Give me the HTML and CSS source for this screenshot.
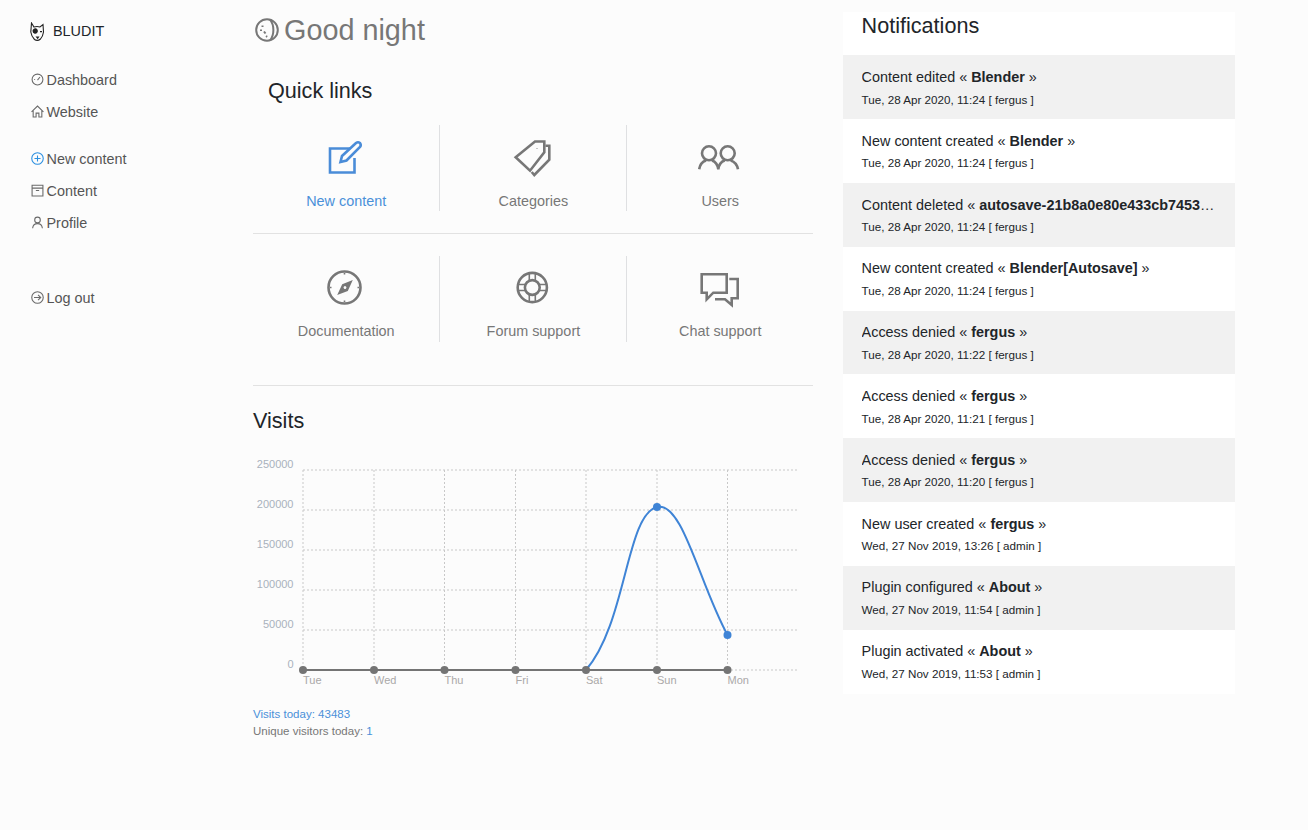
FILE: index.html
```html
<!DOCTYPE html>
<html lang="en">
<head>
<meta charset="utf-8">
<title>BLUDIT</title>
<link rel="stylesheet" href="styles.css">
</head>
<body>
<div class="layout">
  <aside class="sidebar">
    <div class="brand">
      <svg class="logo" viewBox="0 0 16 20"><path class="logo-line" d="M2.5 1 L5 5 Q8 4 11 5 L14 2.5 L14.5 10 Q14 14 11.5 17 Q8.5 19.5 5.500 17.5 Q2.5 14.5 1.8 10 Z"/><path class="logo-fill" d="M3.5 9 a2.7 2.7 0 1 1 5.2 1 a2.7 2.7 0 0 1 -5.2 -1 Z M6.5 14.5 h4 l-1.8 2.8 Z M11 9 h2 v1.3 h-2 Z"/></svg>
      <span>BLUDIT</span>
    </div>
    <nav class="nav">
      <a class="nav-item"><svg class="nav-icon" viewBox="0 0 12 12"><circle cx="6" cy="6" r="5"/><path d="M6 6.5 L8.3 3.7 M3 6 h.8"/></svg>Dashboard</a>
      <a class="nav-item"><svg class="nav-icon" viewBox="0 0 12 12"><path d="M.5 6.3 L6 1 L11.5 6.3 M2 5 V11 H4.7 V7.5 H7.3 V11 H10 V5"/></svg>Website</a>
    </nav>
    <nav class="nav">
      <a class="nav-item"><svg class="nav-icon nav-icon-blue" viewBox="0 0 12 12"><circle cx="6" cy="6" r="5.3"/><path d="M3.2 6 H8.8 M6 3.2 V8.8"/></svg>New content</a>
      <a class="nav-item"><svg class="nav-icon" viewBox="0 0 12 12"><path d="M1 1.2 H11 V11 H1 Z M1 3.8 H11 M4.5 6 H7.5"/></svg>Content</a>
      <a class="nav-item"><svg class="nav-icon" viewBox="0 0 12 12"><circle cx="6" cy="3.6" r="2.6"/><path d="M1.5 11.3 C1.8 8.2 3.5 7 6 7 C8.5 7 10.2 8.2 10.5 11.3"/></svg>Profile</a>
    </nav>
    <nav class="nav nav-last">
      <a class="nav-item"><svg class="nav-icon" viewBox="0 0 12 12"><circle cx="6" cy="6" r="5.3"/><path d="M2.8 6 H9 M6.5 3.5 L9 6 L6.5 8.5"/></svg>Log out</a>
    </nav>
  </aside>

  <main class="main">
    <h1 class="greeting">
      <svg class="moon" viewBox="0 0 24 24"><circle cx="12" cy="12" r="10.8"/><path d="M15 1.6 C19.5 7 19.5 17 15 22.4"/><path class="moon-dots" d="M7.500 7.500 v1.500 M6 11.500 v1.500 M9 13.500 l1.500 2 M11 18 l1.200 .8"/></svg>
      <span>Good night</span>
    </h1>
    <h2 class="links-title">Quick links</h2>
    <div class="links-row links-row-first">
      <a class="link link-active">
        <svg class="link-icon" viewBox="0 0 44 44"><path d="M26 12.5 H6 V36.5 H30.5 V22"/><path d="M16.5 26 L18 20 L32 7 Q34 5.5 36 7 Q37.5 9 36 11 L22.5 24.5 Z"/></svg>
        <span>New content</span>
      </a>
      <a class="link">
        <svg class="link-icon" viewBox="0 0 44 44"><path d="M4.7 21.3 L24 5.5 H33.3 V16.3 L19 34.7 Z"/><path d="M34.5 9.7 H38.3 V23.7 L23.3 39 L20.7 36"/><path class="thin" d="M26 12.2 v.6"/></svg>
        <span>Categories</span>
      </a>
      <a class="link">
        <svg class="link-icon" viewBox="0 0 44 44"><circle cx="11" cy="17.3" r="7"/><circle cx="29.7" cy="17.3" r="7"/><path d="M1.2 33.3 C2 28 5 25.5 8 24.5 M14 24.5 C17 25.5 19.5 28 20.3 33.3 C21 28 23.5 25.5 26.7 24.5 M32.7 24.5 C36 25.5 39 28 40 33.3"/></svg>
        <span>Users</span>
      </a>
    </div>
    <hr class="rule rule-links">
    <div class="links-row">
      <a class="link">
        <svg class="link-icon" viewBox="0 0 44 44"><circle cx="20.5" cy="20.5" r="16"/><path class="needle" fill-rule="evenodd" d="M28.8 13 L23.8 24 L13.2 28 L18.2 17.3 Z M20 19.5 a1.4 1.4 0 1 0 2 2 a1.4 1.4 0 1 0 -2 -2 Z"/><path class="thin" d="M20.5 6 v1.5 M20.5 33.5 v1.5 M6 20.5 h1.5 M33.5 20.5 h1.5"/></svg>
        <span>Documentation</span>
      </a>
      <a class="link">
        <svg class="link-icon" viewBox="0 0 44 44"><circle cx="21.3" cy="20.5" r="14.6"/><circle cx="21.3" cy="20.5" r="7.4"/><path class="thin" d="M18.3 6.5 V13.6 M24.3 6.5 V13.6 M18.3 27.4 V34.5 M24.3 27.4 V34.5 M7.3 17.5 H14.4 M7.3 23.5 H14.4 M28.2 17.5 H35.3 M28.2 23.5 H35.3"/></svg>
        <span>Forum support</span>
      </a>
      <a class="link">
        <svg class="link-icon" viewBox="0 0 44 44"><path d="M3.7 7.3 H28.7 V25.7 H15.3 L8.7 32.3 V25.7 H3.7 Z"/><path d="M31.3 12 H39.7 V31.3 H33.7 V38 L27 32.3 H17"/></svg>
        <span>Chat support</span>
      </a>
    </div>
    <hr class="rule rule-visits">
    <h2 class="visits-title">Visits</h2>
    <svg class="chart" viewBox="0 0 560 240">
      <g class="grid">
        <path d="M50 15 H545 M50 55 H545 M50 95 H545 M50 135 H545 M50 175 H545 M50 215 H545"/>
        <path d="M50 15 V215 M121 15 V215 M191.500 15 V215 M262.500 15 V215 M333 15 V215 M404 15 V215 M474.500 15 V215"/>
      </g>
      <g class="y-labels">
        <text x="40.500" y="13">250000</text>
        <text x="40.500" y="53">200000</text>
        <text x="40.500" y="93">150000</text>
        <text x="40.500" y="133">100000</text>
        <text x="40.500" y="173">50000</text>
        <text x="40.500" y="213">0</text>
      </g>
      <g class="x-labels">
        <text x="50" y="229">Tue</text>
        <text x="121" y="229">Wed</text>
        <text x="191.500" y="229">Thu</text>
        <text x="262.500" y="229">Fri</text>
        <text x="333" y="229">Sat</text>
        <text x="404" y="229">Sun</text>
        <text x="474.500" y="229">Mon</text>
      </g>
      <path class="curve-blue" d="M333 215 C373.500 168.400 373 59.700 404 52 C429.500 45.700 446.300 128.800 474.500 180"/>
      <circle class="dot-blue" cx="404" cy="52" r="4"/>
      <circle class="dot-blue" cx="474.500" cy="180" r="4"/>
      <path class="line-grey" d="M50 215 H474.500"/>
      <g class="dot-grey">
        <circle cx="50" cy="215" r="4"/><circle cx="121" cy="215" r="4"/><circle cx="191.500" cy="215" r="4"/><circle cx="262.500" cy="215" r="4"/><circle cx="333" cy="215" r="4"/><circle cx="404" cy="215" r="4"/><circle cx="474.500" cy="215" r="4"/>
      </g>
    </svg>
    <div class="stats">
      <div class="stat-blue">Visits today: 43483</div>
      <div>Unique visitors today: <span class="stat-value">1</span></div>
    </div>
  </main>

  <section class="notifications">
    <h2 class="notifications-title">Notifications</h2>
    <div class="note"><div class="note-text">Content edited « <b>Blender</b> »</div><div class="note-meta">Tue, 28 Apr 2020, 11:24 [ fergus ]</div></div>
    <div class="note"><div class="note-text">New content created « <b>Blender</b> »</div><div class="note-meta">Tue, 28 Apr 2020, 11:24 [ fergus ]</div></div>
    <div class="note"><div class="note-text">Content deleted « <b>autosave-21b8a0e80e433cb7453e0f8e3d1b2c4a</b> »</div><div class="note-meta">Tue, 28 Apr 2020, 11:24 [ fergus ]</div></div>
    <div class="note"><div class="note-text">New content created « <b>Blender[Autosave]</b> »</div><div class="note-meta">Tue, 28 Apr 2020, 11:24 [ fergus ]</div></div>
    <div class="note"><div class="note-text">Access denied « <b>fergus</b> »</div><div class="note-meta">Tue, 28 Apr 2020, 11:22 [ fergus ]</div></div>
    <div class="note"><div class="note-text">Access denied « <b>fergus</b> »</div><div class="note-meta">Tue, 28 Apr 2020, 11:21 [ fergus ]</div></div>
    <div class="note"><div class="note-text">Access denied « <b>fergus</b> »</div><div class="note-meta">Tue, 28 Apr 2020, 11:20 [ fergus ]</div></div>
    <div class="note"><div class="note-text">New user created « <b>fergus</b> »</div><div class="note-meta">Wed, 27 Nov 2019, 13:26 [ admin ]</div></div>
    <div class="note"><div class="note-text">Plugin configured « <b>About</b> »</div><div class="note-meta">Wed, 27 Nov 2019, 11:54 [ admin ]</div></div>
    <div class="note"><div class="note-text">Plugin activated « <b>About</b> »</div><div class="note-meta">Wed, 27 Nov 2019, 11:53 [ admin ]</div></div>
  </section>
</div>
</body>
</html>
```

FILE: styles.css
```css
* { box-sizing: border-box; }
html, body { margin: 0; height: 100%; }
body {
  background: #fcfcfc;
  color: #212529;
  font-family: "Liberation Sans", Arial, sans-serif;
  font-size: 14.4px;
  line-height: 1.5;
  overflow: hidden;
}
.layout { display: flex; align-items: flex-start; gap: 30px; padding-right: 73px; }

/* Sidebar */
.sidebar { width: 223px; flex: none; padding: 21px 0 0 29px; }
.brand { display: flex; align-items: center; height: 22px; color: #212529; }
.logo { width: 16px; height: 20px; margin-right: 8px; }
.logo-line { fill: none; stroke: #222; stroke-width: 1.1; }
.logo-fill { fill: #222; }
.nav { display: flex; flex-direction: column; margin-top: 22px; }
.nav + .nav { margin-top: 15px; }
.nav.nav-last { margin-top: 43px; }
.nav-item { display: flex; align-items: center; height: 32px; color: #555; white-space: nowrap; }
.nav-icon {
  width: 13px; height: 13px; margin: -4px 2.5px 0 2px; flex: none;
  fill: none; stroke: #6a6a6a; stroke-width: 1;
}
.nav-icon-blue { stroke: #2b8fe0; }

/* Main column */
.main { width: 560px; flex: none; }
.greeting {
  display: flex; align-items: center; margin: 10px 0 0 2px; height: 42px;
  color: #777; font-size: 28.8px; font-weight: 400;
}
.moon { width: 24px; height: 24px; margin: -3px 5px 0 0; fill: none; stroke: #777; stroke-width: 2; }
.moon-dots { stroke-width: 2; }
.links-title {
  margin: 23px 0 0; padding-left: 15px; height: 32px; line-height: 32px;
  font-size: 21.6px; font-weight: 400; color: #212529;
}
.links-row { display: grid; grid-template-columns: 186.4px 187px 186.6px; margin-top: 18px; }
.rule + .links-row { margin-top: 22px; }
.link {
  display: flex; flex-direction: column; align-items: center;
  height: 86px; padding-top: 11px; color: #777;
  border-left: 1px solid #dfe0e2;
}
.link:first-child { border-left: 0; }
.link-icon { width: 44px; height: 44px; flex: none; fill: none; stroke: #777; stroke-width: 2.6; }
.link span { flex: none; line-height: 14px; margin-top: 13px; }
.links-row-first .link span { margin-top: 14px; }
.link-active { color: #4a90d9; }
.link-active .link-icon { stroke: #4a8cd8; }
.thin { stroke-width: 1.6; }
.needle { fill: #777; stroke: none; }
.rule { border: 0; border-top: 1px solid #e2e2e2; margin: 0; }
.rule-links { margin-top: 22px; }
.rule-visits { margin-top: 43px; }
.visits-title {
  margin: 19px 0 0; height: 32px; line-height: 32px;
  font-size: 21.6px; font-weight: 400; color: #212529;
}
.chart { display: block; width: 560px; height: 240px; margin-top: 18px; font-size: 11px; }
.grid path { fill: none; stroke: #c8c8c8; stroke-width: 1; stroke-dasharray: 2 2; }
.y-labels text { text-anchor: end; fill: #a9b2bd; }
.x-labels text { fill: #aaa8a8; }
.curve-blue { fill: none; stroke: #3f84d6; stroke-width: 2; }
.dot-blue { fill: #3f84d6; }
.line-grey { fill: none; stroke: #747474; stroke-width: 2; }
.dot-grey circle { fill: #747474; }
.stats { margin-top: 11px; font-size: 11.52px; line-height: 17px; color: #777; }
.stat-blue, .stat-value { color: #4a90d9; }

/* Notifications */
.notifications { width: 392px; flex: none; margin-top: 12px; background: #fff; }
.notifications-title {
  margin: 0; height: 43.4px; padding: 0 18.6px; line-height: 28px;
  font-size: 21.6px; font-weight: 400; color: #212529;
}
.note { height: 63.82px; padding: 11.5px 18.6px 0; }
.note:nth-of-type(odd) { background: #f1f1f1; }
.note-text { line-height: 21.6px; overflow: hidden; white-space: nowrap; text-overflow: ellipsis; color: #212529; }
.note-text b { color: #212529; }
.note-meta { font-size: 11.65px; line-height: 22px; margin-top: 0.1px; color: #212529; }
```
